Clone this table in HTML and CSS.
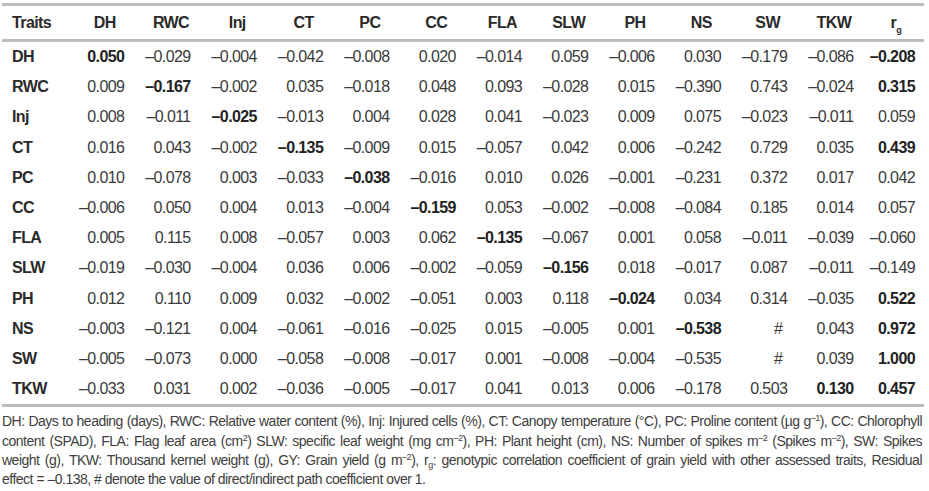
FILE: index.html
```html
<!DOCTYPE html>
<html lang="en">
<head>
<meta charset="utf-8">
<title>Path coefficients</title>
<link rel="stylesheet" href="styles.css">
</head>
<body>
<div class="page">
<table class="paths">
<colgroup>
<col class="c-trait">
<col span="13" class="c-val">
</colgroup>
<thead>
<tr>
<th class="trait">Traits</th><th>DH</th><th>RWC</th><th>Inj</th><th>CT</th><th>PC</th><th>CC</th><th>FLA</th><th>SLW</th><th>PH</th><th>NS</th><th>SW</th><th>TKW</th><th class="last">r<sub>g</sub></th>
</tr>
</thead>
<tbody>
<tr><th>DH</th><td class="b">0.050</td><td>–0.029</td><td>–0.004</td><td>–0.042</td><td>–0.008</td><td>0.020</td><td>–0.014</td><td>0.059</td><td>–0.006</td><td>0.030</td><td>–0.179</td><td>–0.086</td><td class="b last">–0.208</td></tr>
<tr><th>RWC</th><td>0.009</td><td class="b">–0.167</td><td>–0.002</td><td>0.035</td><td>–0.018</td><td>0.048</td><td>0.093</td><td>–0.028</td><td>0.015</td><td>–0.390</td><td>0.743</td><td>–0.024</td><td class="b last">0.315</td></tr>
<tr><th>Inj</th><td>0.008</td><td>–0.011</td><td class="b">–0.025</td><td>–0.013</td><td>0.004</td><td>0.028</td><td>0.041</td><td>–0.023</td><td>0.009</td><td>0.075</td><td>–0.023</td><td>–0.011</td><td class="last">0.059</td></tr>
<tr><th>CT</th><td>0.016</td><td>0.043</td><td>–0.002</td><td class="b">–0.135</td><td>–0.009</td><td>0.015</td><td>–0.057</td><td>0.042</td><td>0.006</td><td>–0.242</td><td>0.729</td><td>0.035</td><td class="b last">0.439</td></tr>
<tr><th>PC</th><td>0.010</td><td>–0.078</td><td>0.003</td><td>–0.033</td><td class="b">–0.038</td><td>–0.016</td><td>0.010</td><td>0.026</td><td>–0.001</td><td>–0.231</td><td>0.372</td><td>0.017</td><td class="last">0.042</td></tr>
<tr><th>CC</th><td>–0.006</td><td>0.050</td><td>0.004</td><td>0.013</td><td>–0.004</td><td class="b">–0.159</td><td>0.053</td><td>–0.002</td><td>–0.008</td><td>–0.084</td><td>0.185</td><td>0.014</td><td class="last">0.057</td></tr>
<tr><th>FLA</th><td>0.005</td><td>0.115</td><td>0.008</td><td>–0.057</td><td>0.003</td><td>0.062</td><td class="b">–0.135</td><td>–0.067</td><td>0.001</td><td>0.058</td><td>–0.011</td><td>–0.039</td><td class="last">–0.060</td></tr>
<tr><th>SLW</th><td>–0.019</td><td>–0.030</td><td>–0.004</td><td>0.036</td><td>0.006</td><td>–0.002</td><td>–0.059</td><td class="b">–0.156</td><td>0.018</td><td>–0.017</td><td>0.087</td><td>–0.011</td><td class="last">–0.149</td></tr>
<tr><th>PH</th><td>0.012</td><td>0.110</td><td>0.009</td><td>0.032</td><td>–0.002</td><td>–0.051</td><td>0.003</td><td>0.118</td><td class="b">–0.024</td><td>0.034</td><td>0.314</td><td>–0.035</td><td class="b last">0.522</td></tr>
<tr><th>NS</th><td>–0.003</td><td>–0.121</td><td>0.004</td><td>–0.061</td><td>–0.016</td><td>–0.025</td><td>0.015</td><td>–0.005</td><td>0.001</td><td class="b">–0.538</td><td class="hash">#</td><td>0.043</td><td class="b last">0.972</td></tr>
<tr><th>SW</th><td>–0.005</td><td>–0.073</td><td>0.000</td><td>–0.058</td><td>–0.008</td><td>–0.017</td><td>0.001</td><td>–0.008</td><td>–0.004</td><td>–0.535</td><td class="hash">#</td><td>0.039</td><td class="b last">1.000</td></tr>
<tr><th>TKW</th><td>–0.033</td><td>0.031</td><td>0.002</td><td>–0.036</td><td>–0.005</td><td>–0.017</td><td>0.041</td><td>0.013</td><td>0.006</td><td>–0.178</td><td>0.503</td><td class="b">0.130</td><td class="b last">0.457</td></tr>
</tbody>
</table>
<div class="note">
<span class="ln">DH: Days to heading (days), RWC: Relative water content (%), Inj: Injured cells (%), CT: Canopy temperature (°C), PC: Proline content (µg g<sup>–1</sup>), CC: Chlorophyll</span>
<span class="ln">content (SPAD), FLA: Flag leaf area (cm<sup>2</sup>) SLW: specific leaf weight (mg cm<sup>–2</sup>), PH: Plant height (cm), NS: Number of spikes m<sup>–2</sup> (Spikes m<sup>–2</sup>), SW: Spikes</span>
<span class="ln">weight (g), TKW: Thousand kernel weight (g), GY: Grain yield (g m<sup>–2</sup>), r<sub>g</sub>: genotypic correlation coefficient of grain yield with other assessed traits, Residual</span>
<span class="ln end">effect = –0.138, # denote the value of direct/indirect path coefficient over 1.</span>
</div>
</div>
</body>
</html>
```
FILE: styles.css
```css
html, body {
  margin: 0;
  padding: 0;
  background: #ffffff;
}

.page {
  padding: 3px 5px 0 2px;
  font-family: "Liberation Sans", Arial, sans-serif;
  color: #3a3a3a;
}

.paths {
  width: 922px;
  border-collapse: collapse;
  border-spacing: 0;
  table-layout: fixed;
  font-size: 16px;
  letter-spacing: -0.6px;
  border-top: 3px solid #bcbcbc;
  border-bottom: 3px solid #bcbcbc;
}

.c-trait { width: 60px; }
.c-val { width: 66.3px; }

.paths thead tr {
  border-bottom: 3px solid #bcbcbc;
}

.paths thead th {
  height: 33px;
  padding: 0 0 0 19px;
  text-align: center;
  font-weight: bold;
  color: #2a2a2a;
}

.paths thead th.trait {
  text-align: left;
  padding-left: 10px;
}

.paths thead th.last {
  padding-left: 10px;
}

.paths sub {
  font-size: 9px;
  line-height: 0;
  vertical-align: -5px;
}

.paths tbody th {
  height: 30.2px;
  padding: 0 0 0 10px;
  text-align: left;
  font-weight: bold;
  color: #2a2a2a;
}

.paths td {
  height: 30.2px;
  padding: 0 4px 0 0;
  text-align: right;
  white-space: nowrap;
}

.paths td.last {
  padding-right: 9px;
}

.paths td.b {
  font-weight: bold;
  color: #222222;
}

.paths td.hash {
  padding-right: 9px;
}

.note {
  width: 920px;
  margin-top: 5px;
  font-size: 14px;
  letter-spacing: -0.5px;
  line-height: 19.4px;
  color: #404040;
}

.ln {
  display: block;
  text-align: justify;
  text-align-last: justify;
}

.ln.end {
  text-align: left;
  text-align-last: left;
}

.note sup {
  font-size: 9px;
  line-height: 0;
  vertical-align: 5px;
}

.note sub {
  font-size: 9px;
  line-height: 0;
  vertical-align: -3px;
}
```
